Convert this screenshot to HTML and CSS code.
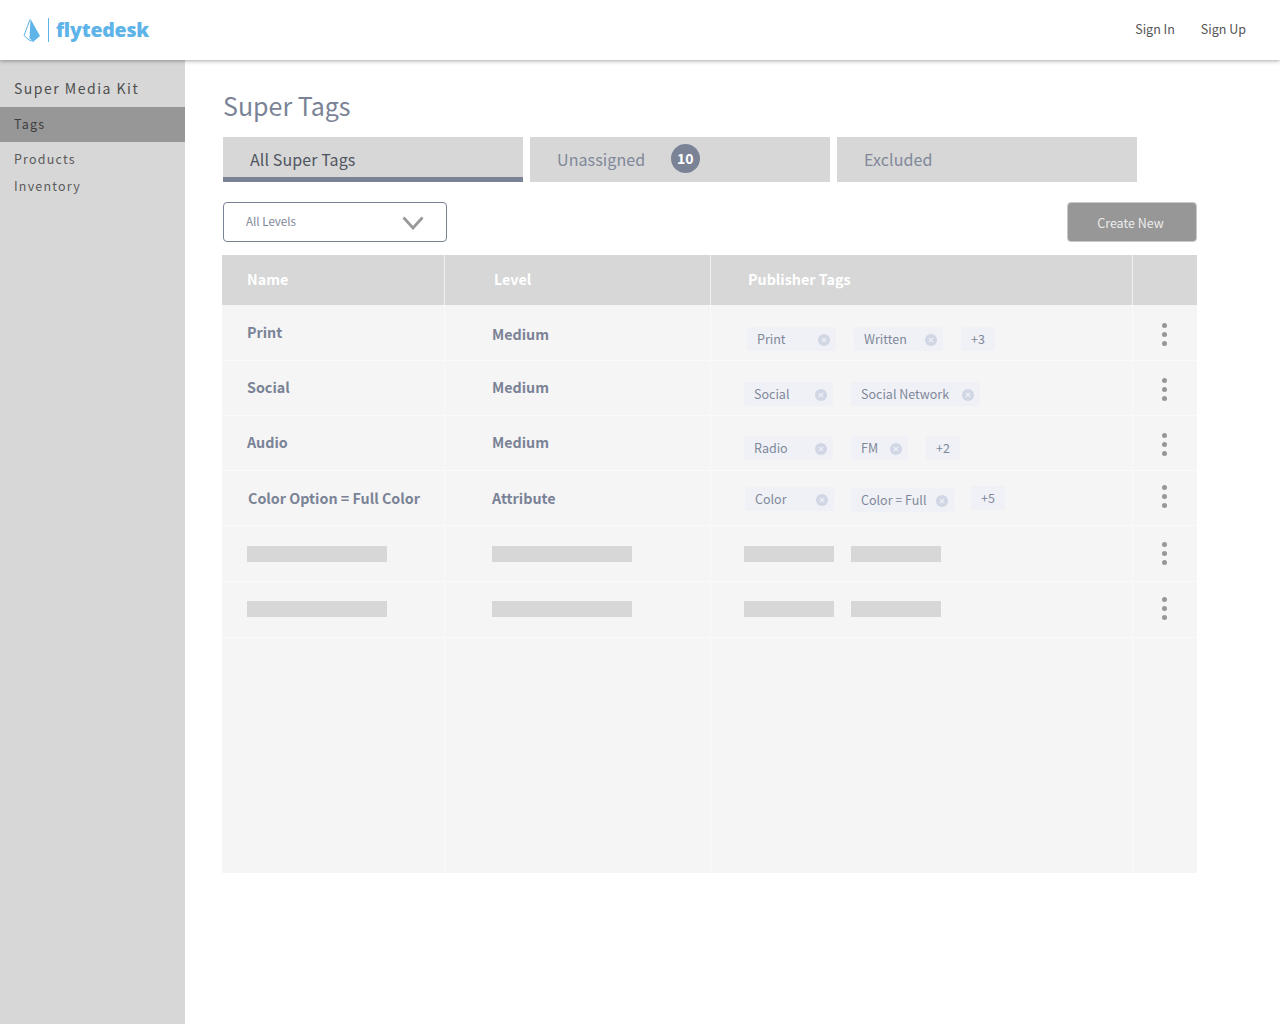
FILE: index.html
```html
<!DOCTYPE html>
<html lang="en">
<head>
<meta charset="utf-8">
<title>Super Tags</title>
<link rel="stylesheet" href="styles.css">
</head>
<body>
<svg class="defs" width="0" height="0"><symbol id="x" viewBox="0 0 12 12"><circle cx="6" cy="6" r="6" fill="#d0d6e4"/><path d="M3.8 3.8l4.4 4.4M8.2 3.8l-4.4 4.4" stroke="#eff1f6" stroke-width="1.2" fill="none"/></symbol></svg>
<header class="topbar">
  <div class="logo">
    <svg class="logo-mark" width="18" height="24" viewBox="0 0 18 24"><path d="M7.5 1 L17 18 L10.5 23.5 L6.5 20.5 Z" fill="#5eb3e8"/><path d="M7 1.5 L1 17.5 L6 22 L10.5 23.5" fill="none" stroke="#5eb3e8" stroke-width="1"/></svg>
    <span class="logo-bar"></span>
    <span class="logo-text">flytedesk</span>
  </div>
  <nav class="topnav"><a>Sign In</a><a>Sign Up</a></nav>
</header>
<div class="shell">
  <aside class="sidebar">
    <div class="side-title">Super Media Kit</div>
    <div class="side-item active">Tags</div>
    <div class="side-item first">Products</div>
    <div class="side-item">Inventory</div>
  </aside>
  <main class="content">
    <h1 class="page-title">Super Tags</h1>
    <div class="tabs">
      <div class="tab active">All Super Tags</div>
      <div class="tab">Unassigned<span class="badge">10</span></div>
      <div class="tab">Excluded</div>
    </div>
    <div class="toolbar">
      <div class="select">All Levels
        <svg class="chevron" width="22" height="14" viewBox="0 0 22 14"><path d="M1.5 1.5 L11 12 L20.5 1.5" fill="none" stroke="#999" stroke-width="2.8"/></svg>
      </div>
      <button class="create">Create New</button>
    </div>
    <div class="table">
      <div class="row head">
        <div class="cell name">Name</div>
        <div class="cell level">Level</div>
        <div class="cell pubs">Publisher Tags</div>
        <div class="cell act"></div>
      </div>

      <div class="row r1">
        <div class="cell name">Print</div>
        <div class="cell level">Medium</div>
        <div class="cell pubs">
          <span class="tag w89">Print<svg class="x"><use href="#x"/></svg></span>
          <span class="tag w89">Written<svg class="x"><use href="#x"/></svg></span>
          <span class="tag more">+3</span>
        </div>
        <div class="cell act"><span class="dots"><b></b><b></b><b></b></span></div>
      </div>

      <div class="row r2">
        <div class="cell name">Social</div>
        <div class="cell level">Medium</div>
        <div class="cell pubs">
          <span class="tag w89">Social<svg class="x"><use href="#x"/></svg></span>
          <span class="tag w129">Social Network<svg class="x"><use href="#x"/></svg></span>
        </div>
        <div class="cell act"><span class="dots"><b></b><b></b><b></b></span></div>
      </div>

      <div class="row r3">
        <div class="cell name">Audio</div>
        <div class="cell level">Medium</div>
        <div class="cell pubs">
          <span class="tag w89">Radio<svg class="x"><use href="#x"/></svg></span>
          <span class="tag w57">FM<svg class="x"><use href="#x"/></svg></span>
          <span class="tag more">+2</span>
        </div>
        <div class="cell act"><span class="dots"><b></b><b></b><b></b></span></div>
      </div>

      <div class="row r4">
        <div class="cell name">Color Option = Full Color</div>
        <div class="cell level">Attribute</div>
        <div class="cell pubs">
          <span class="tag w89">Color<svg class="x"><use href="#x"/></svg></span>
          <span class="tag w103 t-low">Color = Full<svg class="x"><use href="#x"/></svg></span>
          <span class="tag more t-high">+5</span>
        </div>
        <div class="cell act"><span class="dots"><b></b><b></b><b></b></span></div>
      </div>

      <div class="row r5">
        <div class="cell name"><span class="ph w140"></span></div>
        <div class="cell level"><span class="ph w140"></span></div>
        <div class="cell pubs"><span class="ph w90"></span><span class="ph w90"></span></div>
        <div class="cell act"><span class="dots"><b></b><b></b><b></b></span></div>
      </div>

      <div class="row r6">
        <div class="cell name"><span class="ph w140"></span></div>
        <div class="cell level"><span class="ph w140"></span></div>
        <div class="cell pubs"><span class="ph w90"></span><span class="ph w90"></span></div>
        <div class="cell act"><span class="dots"><b></b><b></b><b></b></span></div>
      </div>

      <div class="row filler">
        <div class="cell"></div><div class="cell"></div><div class="cell"></div><div class="cell act"></div>
      </div>
    </div>
  </main>
</div>
</body>
</html>
```
FILE: styles.css
```css
* { box-sizing: border-box; }
html, body { margin: 0; height: 100%; }
body {
  font-family: "Noto Sans CJK JP", "Source Sans Pro", "Open Sans", sans-serif;
  background: #fff;
  color: #7a8396;
  width: 1280px;
  height: 1024px;
  overflow: hidden;
}
.defs { display: block; height: 0; }
.topbar {
  height: 60px;
  display: flex;
  justify-content: space-between;
  align-items: center;
  background: #fff;
  box-shadow: 0 1px 4px rgba(0,0,0,.35);
  position: relative;
  z-index: 2;
  padding: 0 34px 0 23px;
}
.logo { display: flex; align-items: center; height: 30px; }
.logo-mark { display: block; }
.logo-bar { width: 1px; height: 24px; background: #5eb3e8; margin: 0 7px 0 7px; }
.logo-text {
  font-family: "Open Sans", sans-serif;
  font-weight: 800;
  font-size: 19.5px;
  line-height: 30px;
  letter-spacing: -.2px;
  color: #5eb3e8;
}
.topnav { display: flex; gap: 26px; font-size: 12.5px; line-height: 20px; color: #555; margin-top: -2px; }
.shell { display: flex; height: 964px; }
.sidebar { width: 185px; background: #d7d7d7; padding-top: 17px; color: #555; flex: none; }
.side-title { font-size: 14px; line-height: 22px; letter-spacing: 1.5px; padding: 0 14px; margin-bottom: 8px; color: #4e4e4e; }
.side-item { font-size: 12.5px; line-height: 20px; letter-spacing: 1.2px; padding: 0 14px; margin-bottom: 7px; color: #5a5a5a; }
.side-item.active { height: 35px; line-height: 33px; background: #979797; color: #3e3e3e; margin-bottom: 0; }
.side-item.first { margin-top: 7px; }
.content { flex: 1; padding: 26px 0 0 37px; }
.page-title { margin: 0 0 13px 1px; font-size: 25px; line-height: 38px; font-weight: 400; color: #7a8396; }
.tabs { display: flex; gap: 7px; margin-left: 1px; }
.tab {
  width: 300px; height: 45px; background: #d7d7d7; padding: 0 0 2px 27px;
  display: flex; align-items: center; font-size: 16px; letter-spacing: .1px; line-height: 44px; color: #7f8899;
}
.tab.active { color: #4f5560; border-bottom: 5px solid #7a8396; padding: 4px 0 0 27px; }
.badge {
  width: 29px; height: 29px; border-radius: 50%; background: #7a8396; color: #fff; padding-right: 1px;
  font-size: 14px; font-weight: 700; line-height: 29px; text-align: center; margin-left: 26px; margin-top: -1px; letter-spacing: 0;
}
.toolbar { display: flex; justify-content: space-between; align-items: flex-start; margin: 20px 0 13px 1px; width: 974px; }
.select {
  width: 224px; height: 40px; border: 1px solid #7a8396; border-radius: 4px; background: #fff;
  padding: 0 22px 2px; display: flex; justify-content: space-between; align-items: center;
  font-size: 11.6px; line-height: 16px; color: #7f8899;
}
.chevron { display: block; margin-top: 3px; }
.create {
  width: 130px; height: 40px; background: #979797; color: #ececec; border: 1px solid #c9c9c9; border-radius: 4px;
  font: inherit; font-size: 12.5px; padding: 1px 3px 0 0;
}
.table { width: 975px; background: #f5f5f5; }
.row { display: grid; grid-template-columns: 223px 266px 422px 64px; height: 55px; border-bottom: 1px solid #fafafa; }
.row.head { height: 50px; background: #d7d7d7; border: 0; }
.r1, .r5, .r6 { height: 56px; }
.row.filler { height: 235px; border: 0; }
.cell {
  display: flex; align-items: center; padding-left: 25px; border-right: 1px solid #fafafa;
  font-size: 14.3px; font-weight: 700; color: #7a8396; line-height: 20px;
}
.cell.name { padding-bottom: 2px; }
.cell.act { border-right: 0; justify-content: center; padding: 0 2px 0 0; }
.cell.level { padding-left: 47px; padding-bottom: 2px; }
.cell.pubs { padding-left: 33px; gap: 18px; font-weight: 400; padding-top: 9px; }
.row.head .cell { color: #fff; border-right-color: #f0f0f0; padding-top: 0; padding-bottom: 2px; font-weight: 700; }
.row.head .level { padding-left: 49px; }
.row.head .pubs { padding-left: 37px; }

.r1 .level { padding-top: 2px; padding-bottom: 0; }
.r1 .pubs { padding-left: 36px; padding-top: 12px; }
.r2 .pubs { padding-top: 11px; }
.r4 .name { padding-left: 26px; padding-top: 2px; }
.r4 .level { padding-top: 2px; }
.r4 .pubs { padding-left: 34px; padding-top: 1px; gap: 17px; }
.r5 .cell { padding-bottom: 0; }
.r5 .pubs, .r6 .pubs { gap: 17px; padding-top: 1px; }
.r6 .cell { padding-bottom: 2px; }
.r6 .pubs { padding-top: 0; }

.tag {
  display: inline-flex; align-items: center; justify-content: space-between; height: 24px;
  background: #eff1f6; border-radius: 3px; padding: 0 6px 0 10px; color: #7f8899; line-height: 24px; white-space: nowrap;
  font-size: 12.5px; font-weight: 400;
}
.tag.w89 { width: 89px; }
.tag.w129 { width: 129px; }
.tag.w57 { width: 57px; }
.tag.w103 { width: 103px; }
.tag.more { width: 34px; padding: 0; justify-content: center; }
.t-low { margin-top: 2px; }
.t-high { margin-top: -2px; }
.x { width: 12px; height: 12px; flex: none; margin-top: 2px; display: block; }
.dots { display: flex; flex-direction: column; gap: 4px; margin-top: -1px; }
.r1 .dots { margin-top: 3px; }
.r2 .dots, .r3 .dots { margin-top: 2px; }
.r4 .dots { margin-top: -3px; }
.dots b { display: block; width: 5px; height: 5px; border-radius: 50%; background: #979797; }
.ph { display: block; height: 16px; background: #d7d7d7; }
.w140 { width: 140px; }
.w90 { width: 90px; }
```
